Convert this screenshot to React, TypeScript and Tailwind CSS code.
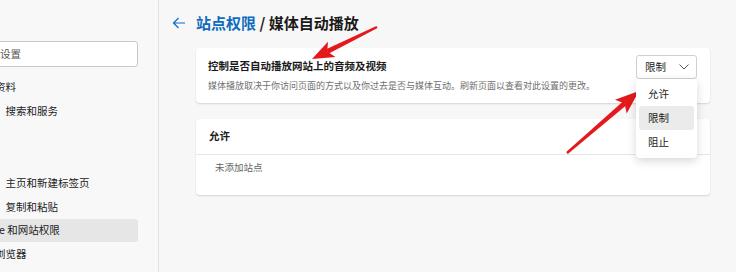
import React from "react";

const font = { fontFamily: '"Noto Sans CJK SC", "Noto Sans", sans-serif' };

function Arrow({ t, p, hl = 22, hw = 8.5, tw = 1.2, bw = 2.6 }: { t: [number, number]; p: [number, number]; hl?: number; hw?: number; tw?: number; bw?: number }) {
  const dx = p[0] - t[0];
  const dy = p[1] - t[1];
  const len = Math.hypot(dx, dy);
  const ux = dx / len;
  const uy = dy / len;
  const px = -uy;
  const py = ux;
  const bx = p[0] - hl * ux;
  const by = p[1] - hl * uy;
  const nx = bx + 5 * ux;
  const ny = by + 5 * uy;
  const head = [
    [p[0], p[1]],
    [bx + hw * px, by + hw * py],
    [nx, ny],
    [bx - hw * px, by - hw * py],
  ]
    .map((q) => q.join(","))
    .join(" ");
  const shaft = [
    [t[0] + tw * px, t[1] + tw * py],
    [nx + bw * px, ny + bw * py],
    [nx - bw * px, ny - bw * py],
    [t[0] - tw * px, t[1] - tw * py],
  ]
    .map((q) => q.join(","))
    .join(" ");
  return (
    <g>
      <polygon points={shaft} fill="#e3191b" />
      <polygon points={head} fill="#e3191b" />
    </g>
  );
}

export default function App() {
  return (
    <div className="relative flex h-[272px] w-[736px] overflow-hidden bg-[#f7f7f7] text-[#1a1a1a]" style={font}>
      {/* Sidebar */}
      <div className="w-[159px] shrink-0 overflow-hidden border-r border-[#e3e3e3] bg-[#f8f8f8]">
        <div className="-ml-[40px] w-[178px] pt-[41px]">
          <div className="flex h-[26px] items-center rounded-[3px] border border-[#c8c8c8] bg-white pl-[18px] text-[10.5px] leading-none text-[#555]">
            搜索设置
          </div>
          <div className="mt-[8px] flex flex-col text-[10.5px] leading-none text-[#222]">
            <div className="flex h-[24px] items-center whitespace-nowrap pl-[14px]">个人资料</div>
            <div className="flex h-[24px] items-center whitespace-nowrap pl-[14px]">隐私、搜索和服务</div>
            <div className="flex h-[24px] items-center whitespace-nowrap pl-[14px]">外观</div>
            <div className="flex h-[24px] items-center whitespace-nowrap pl-[14px]">侧栏</div>
            <div className="flex h-[24px] items-center whitespace-nowrap pl-[14px]">开始、主页和新建标签页</div>
            <div className="flex h-[24px] items-center whitespace-nowrap pl-[14px]">共享、复制和粘贴</div>
            <div className="flex h-[23px] items-center whitespace-nowrap rounded-[3px] bg-[#e6e6e6] pl-[11px]">Cookie 和网站权限</div>
            <div className="flex h-[24px] items-center whitespace-nowrap pl-[14px]">默认浏览器</div>
          </div>
        </div>
      </div>

      {/* Main */}
      <div className="flex flex-1 flex-col pl-[13px] pr-[26px]">
        <div className="flex h-[44px] items-center pt-[1px]">
          <svg width="14" height="12" viewBox="0 0 14 12" className="text-[#0f6cbd]">
            <path d="M13 6H1.5M6.5 1L1.5 6L6.5 11" fill="none" stroke="currentColor" strokeWidth="1.2" />
          </svg>
          <div className="ml-[10px] whitespace-nowrap text-[15px] font-bold leading-none">
            <span className="text-[#0f6cbd]">站点权限</span>
            <span> / 媒体自动播放</span>
          </div>
        </div>

        <div className="ml-[24px] mt-[4px] flex flex-col gap-[16px]">
          {/* Card 1 */}
          <div className="relative flex h-[55px] justify-between rounded-[4px] bg-white pl-[12px] pr-[13px] shadow-[0_1px_2px_rgba(0,0,0,0.14)]">
            <div className="flex flex-col self-center">
              <div className="text-[10.5px] font-bold leading-none text-[#1a1a1a]">控制是否自动播放网站上的音频及视频</div>
              <div className="mt-[10px] text-[9px] leading-none text-[#6e6e6e]">
                媒体播放取决于你访问页面的方式以及你过去是否与媒体互动。刷新页面以查看对此设置的更改。
              </div>
            </div>
            <div className="relative mt-[7px] self-start">
              <div className="flex h-[24px] w-[61px] items-center justify-between rounded-[3px] border border-[#cfcfcf] bg-white pl-[8px] pr-[6px] text-[10.5px] leading-none">
                <span>限制</span>
                <svg width="12" height="8" viewBox="0 0 12 8">
                  <path d="M1.5 1.5L6 6L10.5 1.5" fill="none" stroke="#555" strokeWidth="1" />
                </svg>
              </div>
              <div className="absolute left-0 top-[24px] z-10 w-[61px] rounded-[4px] bg-white px-[3px] pb-[4px] pt-[3px] text-[10.5px] leading-none shadow-[0_3px_10px_rgba(0,0,0,0.16)]">
                <div className="flex h-[24px] items-center pl-[9px]">允许</div>
                <div className="flex h-[24px] items-center rounded-[3px] bg-[#ebebeb] pl-[9px]">限制</div>
                <div className="flex h-[24px] items-center pl-[9px]">阻止</div>
              </div>
            </div>
          </div>

          {/* Card 2 */}
          <div className="flex h-[76px] flex-col rounded-[4px] bg-white shadow-[0_1px_2px_rgba(0,0,0,0.14)]">
            <div className="flex h-[36px] items-center border-b border-[#e6e6e6] pl-[13px] text-[10.5px] font-bold leading-none">允许</div>
            <div className="flex h-[26px] items-center pl-[19px] text-[9.5px] leading-none text-[#666]">未添加站点</div>
          </div>
        </div>
      </div>

      {/* Annotation arrows */}
      <svg className="pointer-events-none absolute left-0 top-0" width="736" height="272" viewBox="0 0 736 272">
        <Arrow t={[377, 27]} p={[312, 59]} />
        <Arrow t={[567, 153]} p={[639, 91]} hl={24} hw={9} />
      </svg>
    </div>
  );
}
